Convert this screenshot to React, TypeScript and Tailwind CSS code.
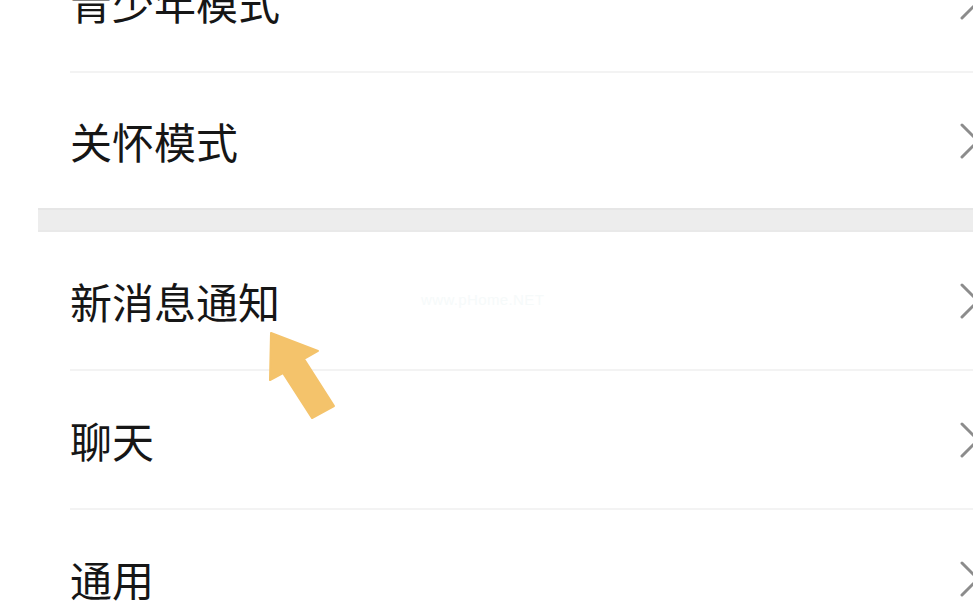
import React from "react";

const Chevron = () => (
  <svg width="22" height="36" viewBox="0 0 22 36" className="shrink-0 -mr-[9px]">
    <polyline points="2,2 18,18 2,34" fill="none" stroke="#8c8c8c" strokeWidth="3" strokeLinecap="round" strokeLinejoin="round" />
  </svg>
);

const Row = ({ label, h }: { label: string; h: string }) => (
  <div className={`flex items-center justify-between pl-[70px] ${h}`}>
    <span className="text-[42px] leading-none text-[#161616]" style={{ fontFamily: '"Noto Sans CJK SC", sans-serif' }}>
      {label}
    </span>
    <Chevron />
  </div>
);

const Divider = () => <div className="ml-[70px] h-[2px] bg-[#f3f3f3]" />;

export default function App() {
  return (
    <div className="relative w-[973px] h-[612px] overflow-hidden bg-white">
      <div className="-mt-[67px] flex flex-col">
        <Row label="青少年模式" h="h-[138px]" />
        <Divider />
        <Row label="关怀模式" h="h-[135px]" />
        <div className="ml-[38px] h-[24px] bg-[#ededed] border-t-2 border-b-2 border-t-[#e6e6e6] border-b-[#e9e9e9]" />
        <Row label="新消息通知" h="h-[137px]" />
        <Divider />
        <Row label="聊天" h="h-[137px]" />
        <Divider />
        <Row label="通用" h="h-[137px]" />
      </div>
      <div
        className="absolute left-[421px] top-[289px] text-[15px] text-[#f6fafa] tracking-wide"
        style={{ fontFamily: '"Liberation Sans", sans-serif' }}
      >
        www.pHome.NET
      </div>
      <svg className="absolute left-0 top-0" width="973" height="612" viewBox="0 0 973 612">
        <polygon
          points="271,333 318,351 304,359 334,406 312,418 283,373 270,380"
          fill="#f4c36b"
          strokeLinejoin="round"
          stroke="#f4c36b"
          strokeWidth="2"
        />
      </svg>
    </div>
  );
}
